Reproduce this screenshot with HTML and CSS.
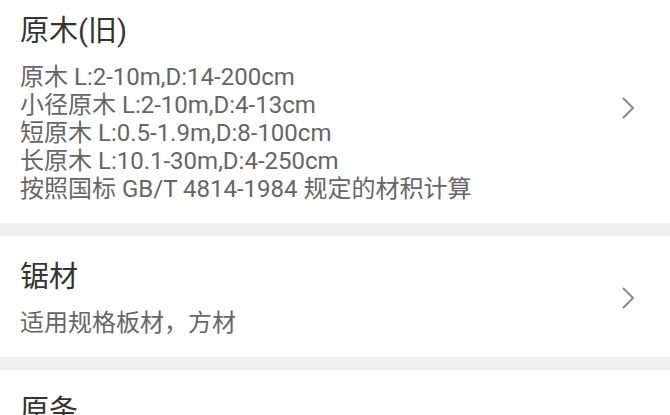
FILE: index.html
```html
<!DOCTYPE html>
<html lang="zh-CN">
<head>
<meta charset="utf-8">
<link rel="stylesheet" href="styles.css">
</head>
<body>
<div class="list">
  <div class="item">
    <div class="text">
      <div class="title">原木(旧)</div>
      <div class="desc">原木 L:2-10m,D:14-200cm<br>小径原木 L:2-10m,D:4-13cm<br>短原木 L:0.5-1.9m,D:8-100cm<br>长原木 L:10.1-30m,D:4-250cm<br>按照国标 GB/T 4814-1984 规定的材积计算</div>
    </div>
    <svg class="chev" width="16" height="24" viewBox="0 0 16 24"><path d="M3 2 L13 12 L3 22" fill="none" stroke="#8a8a8a" stroke-width="2"/></svg>
  </div>
  <div class="item">
    <div class="text">
      <div class="title">锯材</div>
      <div class="desc">适用规格板材，方材</div>
    </div>
    <svg class="chev" width="16" height="24" viewBox="0 0 16 24"><path d="M3 2 L13 12 L3 22" fill="none" stroke="#8a8a8a" stroke-width="2"/></svg>
  </div>
  <div class="item">
    <div class="text">
      <div class="title">原条</div>
      <div class="desc">&nbsp;</div>
    </div>
  </div>
</div>
</body>
</html>
```
FILE: styles.css
```css
html, body {
  margin: 0;
  padding: 0;
  background: #f0f0f0;
  overflow: hidden;
}
body {
  font-family: Roboto, "Noto Sans CJK SC", sans-serif;
}
.list {
  margin-top: -10px;
  display: flex;
  flex-direction: column;
  gap: 13px;
}
.item {
  background: #ffffff;
  display: flex;
  align-items: center;
  padding: 23px 34px 20px 20px;
}
.text {
  flex: 1;
  display: flex;
  flex-direction: column;
  gap: 14px;
}
.title {
  font-size: 29px;
  line-height: 36px;
  color: #333333;
}
.desc {
  font-size: 24px;
  line-height: 28px;
  color: #666666;
}
.chev {
  flex: none;
  display: block;
}
```
